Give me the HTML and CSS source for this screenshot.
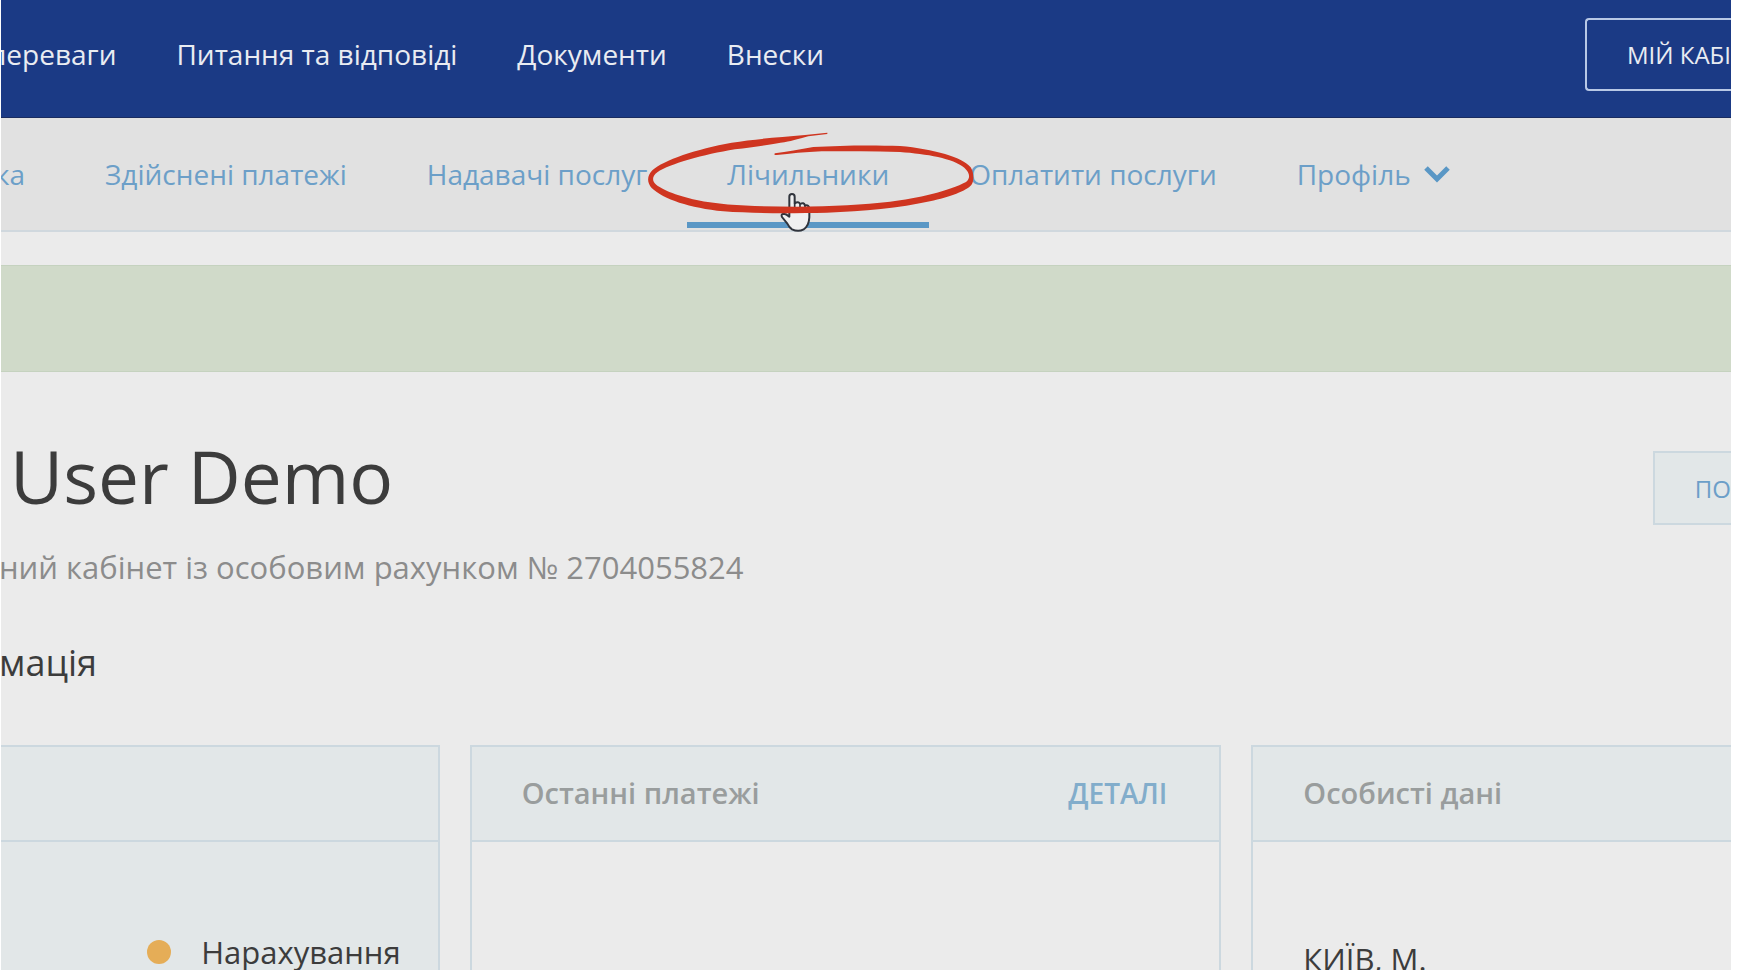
FILE: index.html
```
<!DOCTYPE html>
<html lang="uk">
<head>
    <meta charset="UTF-8" />
    <title>Особистий кабінет</title>
    <link rel="stylesheet" href="styles.css">
</head>
<body>
<div class="page">

  <header class="topbar">
      <nav class="topbar-nav">
          <a href="#">переваги</a>
          <a href="#">Питання та відповіді</a>
          <a href="#">Документи</a>
          <a href="#">Внески</a>
      </nav>
      <button class="btn-cabinet" type="button">МІЙ КАБІ</button>
  </header>

  <nav class="tabs">
      <a href="#">ка</a>
      <a href="#">Здійснені платежі</a>
      <a href="#">Надавачі послуг</a>
      <a href="#" class="active">Лічильники
          <svg class="marker" viewBox="0 0 1440 420" aria-hidden="true">
              <!-- hand cursor -->
              <path d="M628 314V260Q628 252 636 252Q644 252 644 260V280Q656 272 660 282Q672 275 675 287Q687 283 688 297V322Q687 348 671 358Q655 367 636 358Q628 353 622 341L606 321Q602 312 611 311Q618 311 628 320Z" fill="#f0f0f0" stroke="#30343c" stroke-width="6" stroke-linejoin="round"/>
              <path d="M644 280V296M660 283V297M675 288V298" fill="none" stroke="#30343c" stroke-width="5"/>
              <!-- hand-drawn ring -->
              <path d="M742 68L675 75C590 82 520 88 455 98C350 117 250 150 217 181C201 197 200 218 215 234C250 268 330 294 430 304C520 311 640 310 740 308C850 304 960 294 1050 274C1110 261 1160 242 1174 225C1183 214 1182 187 1172 172C1150 142 1060 117 960 108C880 105 780 106 700 111C660 117 620 126 585 130C581 132 583 136 590 135C630 131 675 126 725 124C800 125 880 124 960 126C1040 132 1120 145 1153 173C1170 188 1172 206 1158 216C1110 242 1010 266 930 275C850 284 760 289 650 290C540 290 430 287 350 270C290 258 235 236 222 217C216 206 220 196 232 187C270 161 370 134 465 118C540 108 610 99 640 91C660 86 675 81 685 79L742 72Z" fill="#cf3520"/>
          </svg>
      </a>
      <a href="#">Оплатити послуги</a>
      <a href="#">Профіль
          <svg class="chevron" viewBox="0 0 28 18" aria-hidden="true"><path d="M3 3L14 14L25 3" fill="none" stroke="currentColor" stroke-width="5"/></svg>
      </a>
  </nav>

  <div class="notice"></div>

  <main>
      <div class="title-row">
          <h1>User Demo</h1>
          <button class="btn-light" type="button">ПО</button>
      </div>
      <p class="account">ний кабінет із особовим рахунком № 2704055824</p>
      <h2>мація</h2>

      <div class="cards">
          <section class="card card-balance">
              <header></header>
              <div class="card-body legend"><span class="dot"></span>Нарахування</div>
          </section>
          <section class="card">
              <header><h3>Останні платежі</h3><a href="#">ДЕТАЛІ</a></header>
          </section>
          <section class="card">
              <header><h3>Особисті дані</h3></header>
              <div class="card-body">КИЇВ, М.</div>
          </section>
      </div>
  </main>

</div>
</body>
</html>
```
FILE: styles.css
```
* {
    box-sizing: border-box;
}

body {
    margin: 0;
    background: #fff;
    font-family: "Open Sans", "Noto Sans", sans-serif;
    font-size: 28px;
    color: #3c3c3c;
}

.page {
    height: 100vh;
    margin: 0 9px 0 1px;
    overflow: hidden;
    background: #ebebeb;
}

a {
    text-decoration: none;
}

button {
    font: inherit;
    white-space: nowrap;
    text-align: left;
}

h1, h2, h3, p {
    margin: 0;
    font-weight: 400;
}

.topbar {
    display: flex;
    justify-content: space-between;
    align-items: center;
    height: 118px;
    padding-bottom: 9px;
    background: #1b3a85;
    border-bottom: 1px solid #1a2c60;
}

.topbar-nav {
    display: flex;
    gap: 60px;
    margin-left: -12px;
}

.topbar-nav a {
    color: #e9ecf2;
}

.btn-cabinet {
    height: 73px;
    padding: 0 0 0 40px;
    background: none;
    border: 2px solid #b8c8e6;
    border-right: 0;
    border-radius: 4px 0 0 4px;
    color: #e9ecf2;
    font-size: 24px;
}

.tabs {
    display: flex;
    height: 114px;
    margin-left: -46px;
    background: #e1e1e1;
    border-bottom: 2px solid #d0d8de;
}

.tabs a {
    position: relative;
    display: flex;
    align-items: center;
    gap: 12px;
    padding: 8px 40px 0;
    border-bottom: 6px solid transparent;
    margin-bottom: 2px;
    color: #6c9fc8;
    white-space: nowrap;
}

.tabs .active {
    border-bottom-color: #5a97c5;
}

/* lies over the active tab */
.marker {
    position: absolute;
    top: -8px;
    left: -107px;
    z-index: 1;
    width: 480px;
    height: 140px;
    pointer-events: none;
}

.chevron {
    width: 28px;
    height: 18px;
    color: #5a97c5;
}

.notice {
    height: 107px;
    margin-top: 33px;
    background: #d0dac9;
    border: 1px solid #c5d2bf;
    border-width: 1px 0;
}

main {
    margin-left: -2px;
}

.title-row {
    display: flex;
    justify-content: space-between;
    align-items: flex-end;
    margin-top: 55px;
    padding-left: 11px;
}

h1 {
    font-size: 73px;
    line-height: 98px;
}

.btn-light {
    height: 74px;
    padding: 0 0 0 40px;
    background: #e2e7e8;
    border: 2px solid #ccd8df;
    border-right: 0;
    color: #6c9fc8;
    font-size: 24px;
}

.account {
    margin-top: 18px;
    font-size: 31px;
    line-height: 48px;
    color: #8c8c8c;
}

h2 {
    margin-top: 48px;
    font-size: 36px;
    line-height: 48px;
}

/* the outer cards run past both edges of the window */
.cards {
    display: grid;
    grid-template-columns: repeat(3, 1fr);
    gap: 30px;
    margin: 58px -272px 0 -311px;
}

.card {
    height: 480px;
    border: 2px solid #ccd8df;
}

.card header {
    display: flex;
    justify-content: space-between;
    align-items: center;
    height: 95px;
    padding: 0 52px 2px 50px;
    background: #e2e7e8;
    border-bottom: 2px solid #ccd8df;
}

.card h3 {
    font-size: 29px;
    font-weight: 600;
    color: #999d9d;
}

.card header a {
    font-weight: 600;
    color: #82adcb;
}

.card-balance {
    background: #e2e7e8;
}

.card-body {
    padding: 93px 50px 0;
    font-size: 31px;
    line-height: 48px;
}

.legend {
    display: flex;
    justify-content: flex-end;
    align-items: center;
    gap: 30px;
    padding: 86px 37px 0;
}

.dot {
    width: 24px;
    height: 24px;
    border-radius: 50%;
    background: #e5ad57;
}
```
